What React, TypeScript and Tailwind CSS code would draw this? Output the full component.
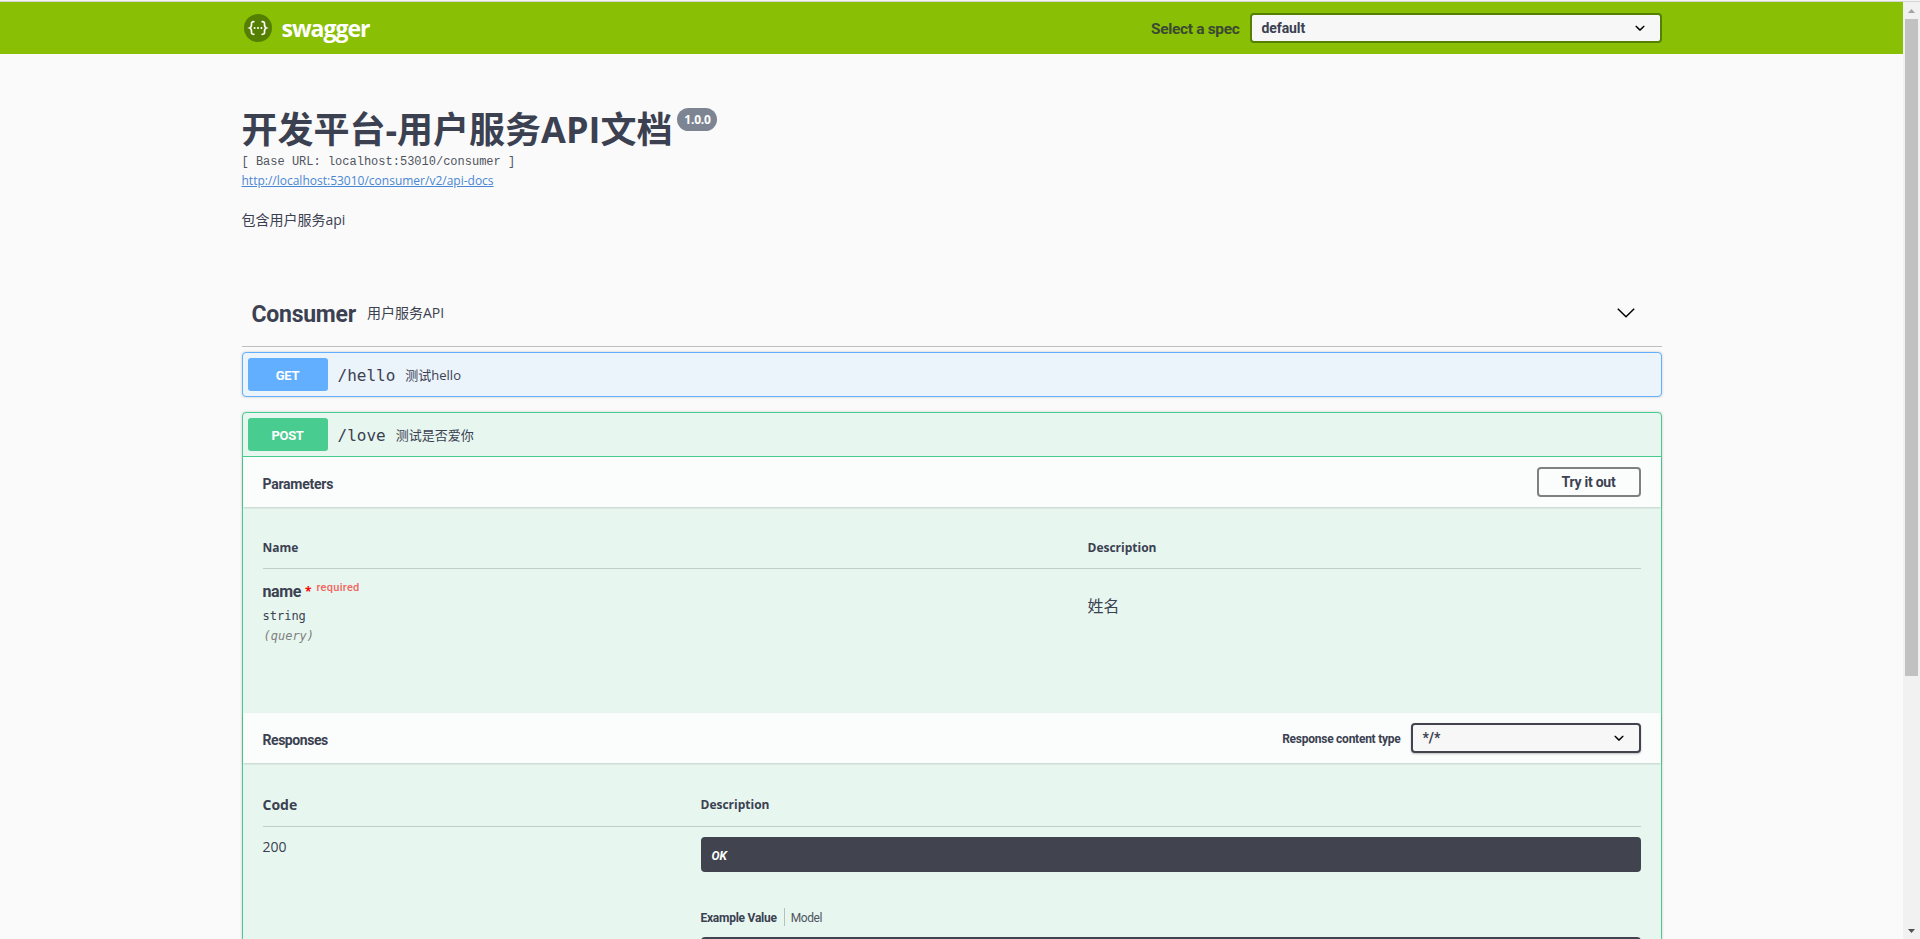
import React from "react";

const HEAD = "font-['Roboto','Noto_Sans_CJK_SC',sans-serif] font-bold";
const MONO = "font-['DejaVu_Sans_Mono',monospace]";

function SwaggerMark() {
  return (
    <svg width="28" height="28" viewBox="0 0 28 28" fill="none">
      <circle cx="14" cy="14" r="14" fill="#547f00" />
      <g stroke="#fff" strokeWidth="1.7" strokeLinecap="round">
        <path d="M9.8 7.7c-1.9 0-2.4.7-2.3 2.3.1 2 .2 3.3-1.7 4 1.9.7 1.8 2 1.7 4-.1 1.6.4 2.3 2.3 2.3" />
        <path d="M18.2 7.7c1.9 0 2.4.7 2.3 2.3-.1 2-.2 3.3 1.7 4-1.9.7-1.8 2-1.7 4 .1 1.6-.4 2.3-2.3 2.3" />
      </g>
      <g fill="#fff">
        <circle cx="10.6" cy="14" r="1.05" />
        <circle cx="14" cy="14" r="1.05" />
        <circle cx="17.4" cy="14" r="1.05" />
      </g>
    </svg>
  );
}

function SelectArrow() {
  return (
    <svg width="20" height="20" viewBox="0 0 20 20">
      <path
        d="M13.418 7.859c.271-.268.709-.268.978 0 .27.268.272.701 0 .969l-3.908 3.83c-.27.268-.707.268-.979 0l-3.908-3.83c-.27-.267-.27-.701 0-.969.271-.268.709-.268.978 0L10 11z"
        fill="#000"
      />
    </svg>
  );
}

function TopBar() {
  return (
    <header className="flex h-[52px] items-center justify-center bg-[#89bf04]">
      <div className="flex w-[1420px] items-center">
        <div className="flex flex-1 items-center gap-2.5 pl-0.5">
          <SwaggerMark />
          <span className="text-[23px] leading-7 font-bold tracking-[-1px] text-white">swagger</span>
        </div>
        <span className={`${HEAD} mr-[10px] pt-0.5 text-[15.5px] leading-5 tracking-[-0.33px] text-[#3b4a33]`}>
          Select a spec
        </span>
        <div className="flex h-[30px] w-[412px] items-center justify-between rounded border-2 border-[#547f00] bg-[#f7f7f7] pr-[10px] pl-[10px]">
          <span className={`${HEAD} text-sm leading-5 tracking-[-0.1px]`}>default</span>
          <SelectArrow />
        </div>
      </div>
    </header>
  );
}

function ApiInfo() {
  return (
    <section className="flex flex-col pt-[52px]">
      <div className="flex h-11 items-start">
        <h1 className="pt-0.5 text-4xl leading-[44px] font-bold whitespace-nowrap">开发平台-用户服务API文档</h1>
        <span className="mt-0.5 ml-[5px] flex h-[23px] w-10 items-center justify-center rounded-full bg-[#7d8492] text-xs font-bold tracking-[-0.25px] text-white">
          1.0.0
        </span>
      </div>
      <pre className="mt-1 h-[18px] font-['Liberation_Mono',monospace] text-xs leading-[17px] text-[#50555f]">
        [ Base URL: localhost:53010/consumer ]
      </pre>
      <a className="h-[18px] self-start text-xs leading-[18px] text-[#4987d4] underline">
        http://localhost:53010/consumer/v2/api-docs
      </a>
      <p className="mt-5 text-sm leading-5">包含用户服务api</p>
    </section>
  );
}

function TagHeader() {
  return (
    <div className="mt-[50px] flex h-[67px] items-center border-b border-[#bcbec2] pr-[27px] pl-2.5">
      <h2 className={`${HEAD} pt-1 text-[23px] leading-[30px] tracking-[-0.25px]`}>Consumer</h2>
      <span className="ml-[11px] flex-1 text-sm leading-5">用户服务API</span>
      <svg width="18" height="10" viewBox="0 0 18 10" fill="none">
        <path d="M.8.8 9 8.7 17.2.8" stroke="#000" strokeWidth="1.5" />
      </svg>
    </div>
  );
}

function OpSummary({ method, path, text, badge }: { method: string; path: string; text: string; badge: string }) {
  return (
    <div className="flex items-center p-[5px]">
      <span className={`${HEAD} ${badge} flex h-[33px] w-20 items-center justify-center rounded-[3px] pt-0.5 text-[13px] tracking-[-0.3px] text-white`}>
        {method}
      </span>
      <span className={`${MONO} ml-2.5 pt-[3px] text-base leading-5`}>{path}</span>
      <span className="ml-[10px] text-[13px] leading-5">{text}</span>
    </div>
  );
}

function SectionBar({ title, track, children }: { title: string; track: string; children: React.ReactNode }) {
  return (
    <div className="flex h-[50px] items-center bg-white/80 px-5 shadow-[0_1px_2px_rgba(0,0,0,0.15)]">
      <h4 className={`${HEAD} ${track} flex-1 pt-[3px] text-sm leading-5`}>{title}</h4>
      {children}
    </div>
  );
}

function Parameters() {
  return (
    <div className="h-[206px] px-5">
      <div className="flex h-[62px] border-b border-[#c0cfca] pt-[33px] text-xs leading-4 font-bold">
        <span className="w-[825px]">Name</span>
        <span>Description</span>
      </div>
      <div className="flex">
        <div className="w-[825px] pt-[13px]">
          <div className="flex h-[26px] items-start">
            <span className={`${HEAD} text-base leading-5 tracking-[-0.4px]`}>name</span>
            <span className="ml-1 pt-0.5 text-xs leading-4 font-bold text-[#ff0000]">*</span>
            <span className="ml-[5px] font-['Roboto',sans-serif] text-[11px] leading-3 font-medium tracking-[0.3px] text-[#f06560]">
              required
            </span>
          </div>
          <div className={`${MONO} h-5 text-xs leading-4`}>string</div>
          <div className={`${MONO} h-5 pl-px text-xs leading-4 text-[#808080] italic`}>(query)</div>
        </div>
        <div className="pt-[25px] text-base leading-6">姓名</div>
      </div>
    </div>
  );
}

function Responses() {
  return (
    <div className="px-5">
      <div className="flex h-16 items-start border-b border-[#c0cfca] pt-8 font-bold">
        <span className="w-[438px] text-sm leading-[19px]">Code</span>
        <span className="text-xs leading-[19px]">Description</span>
      </div>
      <div className="flex pt-[10px]">
        <span className="w-[438px] text-sm leading-5">200</span>
        <div className="flex-1">
          <div className="flex h-[35px] items-center rounded bg-[#41444e] px-[11px] text-xs font-bold text-white italic">
            <span className={`${HEAD} pt-0.5`}>OK</span>
          </div>
          <div className="mt-9 flex h-[18px] items-center text-xs">
            <span className={`${HEAD} pt-0.5 tracking-[-0.25px]`}>Example Value</span>
            <span className="ml-[7px] h-full w-px bg-[#b5c1bd]" />
            <span className="ml-1.5 pt-0.5 font-['Roboto',sans-serif] tracking-[-0.4px] text-[#50555f]">Model</span>
          </div>
          <div className="mt-[11px] h-20 rounded bg-[#41444e]" />
        </div>
      </div>
    </div>
  );
}

function Scrollbar() {
  return (
    <aside className="flex h-full w-[17px] flex-col items-center bg-[#f1f1f1]">
      <svg className="h-[17px] w-[17px] shrink-0" viewBox="0 0 17 17">
        <path d="M5 11h7L8.500 7z" fill="#a3a3a3" />
      </svg>
      <div className="h-[657px] w-[13px] bg-[#c1c1c1]" />
      <div className="flex-1" />
      <svg className="h-[17px] w-[17px] shrink-0" viewBox="0 0 17 17">
        <path d="M5 7h7l-3.500 4z" fill="#505050" />
      </svg>
    </aside>
  );
}

export default function App() {
  return (
    <div className="flex h-[939px] w-[1920px] flex-col overflow-hidden bg-[#fafafa] font-['Open_Sans','Noto_Sans_CJK_SC',sans-serif] text-[#3b4151]">
      <div className="h-0.5 shrink-0 border-b border-[#d4d4d4] bg-[#f4f4f4]" />
      <div className="flex h-[937px]">
        <div className="h-full flex-1 overflow-hidden">
          <TopBar />
          <main className="mx-auto w-[1420px]">
            <ApiInfo />
            <TagHeader />
            <div className="mt-[5px] h-[45px] rounded border border-[#61affe] bg-[#ebf3fb] shadow-[0_0_3px_rgba(0,0,0,0.19)]">
              <OpSummary method="GET" path="/hello" text="测试hello" badge="bg-[#61affe]" />
            </div>
            <div className="mt-[15px] h-[700px] rounded border border-[#49cc90] bg-[#e7f6ef] shadow-[0_0_3px_rgba(0,0,0,0.19)]">
              <div className="h-11 border-b border-[#49cc90]">
                <OpSummary method="POST" path="/love" text="测试是否爱你" badge="bg-[#49cc90]" />
              </div>
              <SectionBar title="Parameters" track="tracking-[-0.25px]">
                <button className={`${HEAD} h-[30px] w-[104px] rounded border-2 border-[#808080] text-sm leading-5 tracking-[-0.25px]`}>
                  Try it out
                </button>
              </SectionBar>
              <Parameters />
              <SectionBar title="Responses" track="tracking-[-0.45px]">
                <span className={`${HEAD} mr-[10px] pt-0.5 text-xs tracking-[-0.25px]`}>Response content type</span>
                <div className="flex h-[30px] w-[230px] items-center justify-between rounded border-2 border-[#41444e] bg-[#f7f7f7] pr-[10px] pl-[10px] shadow-[0_1px_2px_rgba(0,0,0,0.25)]">
                  <span className={`${HEAD} text-sm leading-5`}>*/*</span>
                  <SelectArrow />
                </div>
              </SectionBar>
              <Responses />
            </div>
          </main>
        </div>
        <Scrollbar />
      </div>
    </div>
  );
}
